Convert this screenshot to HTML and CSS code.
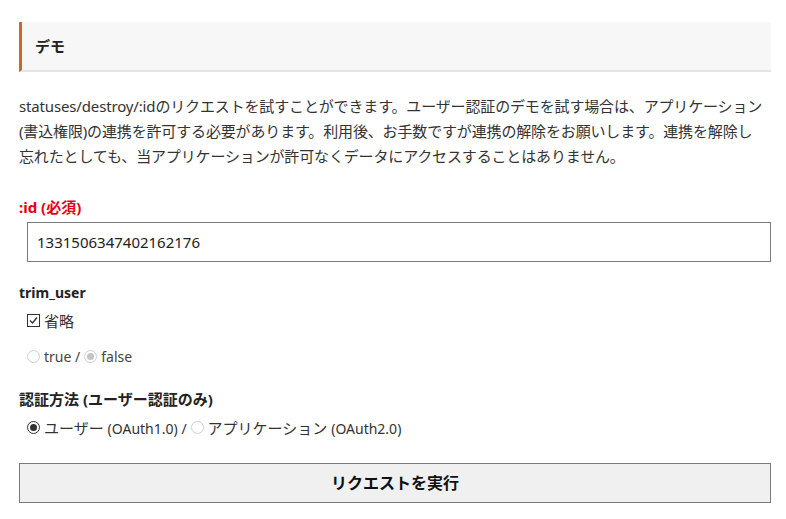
FILE: index.html
```html
<!DOCTYPE html>
<html lang="ja">
<head>
<meta charset="utf-8">
<title>デモ</title>
<link rel="stylesheet" href="styles.css">
</head>
<body>
<div class="page">
  <h2 class="heading">デモ</h2>
  <p class="intro">statuses/destroy/:idのリクエストを試すことができます。ユーザー認証のデモを試す場合は、アプリケーション(書込権限)の連携を許可する必要があります。利用後、お手数ですが連携の解除をお願いします。連携を解除し忘れたとしても、当アプリケーションが許可なくデータにアクセスすることはありません。</p>

  <div class="field field-id">
    <div class="label required">:id (必須)</div>
    <div class="input">1331506347402162176</div>
  </div>

  <div class="field field-trim">
    <div class="label latin-label">trim_user</div>
    <div class="row check-row">
      <span class="checkbox"><svg viewBox="0 0 13 13" width="13" height="13"><rect x="0.5" y="0.5" width="12" height="12" fill="#fff" stroke="#333"/><path d="M3 6.5 L5.5 9 L10 3.5" fill="none" stroke="#333" stroke-width="1.3"/></svg></span>
      <span class="opt">省略</span>
    </div>
    <div class="row radio-row muted">
      <span class="radio disabled"></span><span class="opt">true /</span>
      <span class="radio disabled checked"></span><span class="opt">false</span>
    </div>
  </div>

  <div class="field field-auth">
    <div class="label">認証方法 (ユーザー認証のみ)</div>
    <div class="row auth-row">
      <span class="radio checked"></span><span class="opt">ユーザー <span class="latin">(OAuth1.0) /</span></span>
      <span class="radio disabled"></span><span class="opt">アプリケーション <span class="latin">(OAuth2.0)</span></span>
    </div>
  </div>

  <div class="button">リクエストを実行</div>
</div>
</body>
</html>
```

FILE: styles.css
```css
body {
  margin: 0;
  background: #fff;
  color: #333;
  font-family: "Noto Sans", "Noto Sans CJK JP", sans-serif;
  font-size: 15px;
}

.page {
  padding: 22px 15px 0 19px;
}

.heading {
  margin: 0;
  height: 48px;
  line-height: 48px;
  padding: 0 13px;
  background: #f7f7f7;
  border-left: 3px solid #c8692b;
  border-bottom: 2px solid #e4e4e4;
  font-size: 15px;
  font-weight: bold;
  color: #222;
}

.intro {
  margin: 22px 7px 0 0;
  line-height: 25px;
  font-size: 15px;
  letter-spacing: -0.15px;
}

.field-id {
  margin-top: 27px;
}

.field-trim {
  margin-top: 20px;
}

.field-auth {
  margin-top: 20px;
}

.label {
  font-size: 15px;
  font-weight: bold;
  line-height: 22px;
  color: #222;
}

.label.latin-label {
  font-size: 14px;
}

.label.required {
  color: #e50012;
}

.input {
  margin: 4px 0 0 8px;
  height: 38px;
  line-height: 38px;
  border: 1px solid #7a7a7a;
  padding: 0 9px;
  font-size: 15px;
  color: #222;
}

.row {
  display: flex;
  align-items: center;
  height: 24px;
  margin-left: 8px;
  font-size: 15px;
}

.row .latin {
  font-size: 14px;
}

.check-row {
  margin-top: 4px;
}

.radio-row {
  margin-top: 12px;
  font-size: 14px;
}

.auth-row {
  margin-top: 5px;
}

.checkbox {
  display: flex;
  width: 13px;
  height: 13px;
  margin-right: 4px;
}

.opt {
  margin-right: 4px;
}

.radio {
  box-sizing: border-box;
  width: 13px;
  height: 13px;
  border-radius: 50%;
  border: 1px solid #333;
  background: #fff;
  margin-right: 4px;
  position: relative;
  flex: none;
}

.radio.checked::after {
  content: "";
  position: absolute;
  left: 2px;
  top: 2px;
  width: 7px;
  height: 7px;
  border-radius: 50%;
  background: #333;
}

.radio.disabled {
  border-color: #cfcfcf;
}

.radio.disabled.checked::after {
  background: #c4c4c4;
}

.muted .opt {
  color: #444;
}

.button {
  margin-top: 24px;
  height: 38px;
  line-height: 38px;
  border: 1px solid #7a7a7a;
  background: #f0f0f0;
  text-align: center;
  font-size: 16px;
  font-weight: bold;
  color: #111;
}
```
